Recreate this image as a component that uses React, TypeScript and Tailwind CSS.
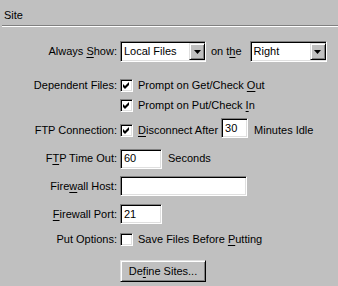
import React from "react";

const sunken =
  "border border-t-[#808080] border-l-[#808080] border-r-white border-b-white shadow-[inset_1px_1px_0_#000,inset_-1px_-1px_0_#dfdfdf] bg-white";
const raised =
  "border border-t-[#dfdfdf] border-l-[#dfdfdf] border-r-black border-b-black shadow-[inset_1px_1px_0_#fff,inset_-1px_-1px_0_#808080] bg-[#c0c0c0]";

function U({ children }: { children: React.ReactNode }) {
  return <span className="underline underline-offset-[2px] decoration-1">{children}</span>;
}

function Check({ checked, className = "" }: { checked: boolean; className?: string }) {
  return (
    <div className={`w-[13px] h-[13px] shrink-0 flex items-center justify-center ${sunken} ${className}`}>
      {checked && (
        <svg width="9" height="9" viewBox="0 0 9 9" className="block">
          <path d="M1 3 L3 5 L7 1 L7 4 L3 8 L1 6 Z" fill="#000" />
        </svg>
      )}
    </div>
  );
}

function Select({ value, width }: { value: string; width: number }) {
  return (
    <div
      className={`h-[21px] flex items-center justify-between pl-[3px] pr-[0px] ${sunken}`}
      style={{ width }}
    >
      <span>{value}</span>
      <div className={`w-[16px] h-[17px] flex items-center justify-center ${raised}`}>
        <svg width="7" height="4" viewBox="0 0 7 4" className="block">
          <path d="M0 0 H7 L3.5 4 Z" fill="#000" />
        </svg>
      </div>
    </div>
  );
}

function Input({ value, width }: { value?: string; width: number }) {
  return (
    <div className={`h-[20px] flex items-center pl-[3px] ${sunken}`} style={{ width }}>
      {value}
    </div>
  );
}

function Row({
  label,
  children,
  className = "",
  labelClass = "",
}: {
  label?: React.ReactNode;
  children: React.ReactNode;
  className?: string;
  labelClass?: string;
}) {
  return (
    <div className={`flex items-center ${className}`}>
      <div className={`w-[117px] text-right shrink-0 ${labelClass}`}>{label}</div>
      <div className="ml-[3px] flex items-center">{children}</div>
    </div>
  );
}

export default function App() {
  return (
    <div
      className="w-[338px] h-[286px] bg-[#c0c0c0] text-black text-[11px] leading-[13px] overflow-hidden"
      style={{ fontFamily: '"Liberation Sans", Arial, sans-serif' }}
    >
      <div className="h-[25px] pl-[4px] pt-[9px]">Site</div>
      <div className="ml-[2px] h-[1px] bg-[#808080]" />
      <div className="ml-[2px] h-[1px] bg-white" />

      <Row className="mt-[14px] h-[21px]" label={<>Always <U>S</U>how:</>}>
        <Select value="Local Files" width={86} />
        <span className="ml-[5px] mr-[8px]">
          on t<U>h</U>e
        </span>
        <Select value="Right" width={77} />
      </Row>

      <Row className="mt-[17px] h-[13px]" label="Dependent Files:">
        <Check checked />
        <span className="ml-[5px]">
          Prompt on Get/Check <U>O</U>ut
        </span>
      </Row>

      <Row className="mt-[7px] h-[13px]">
        <Check checked />
        <span className="ml-[5px]">
          Prompt on Put/Check <U>I</U>n
        </span>
      </Row>

      <Row className="mt-[6px] h-[20px]" labelClass="mt-[4px]" label="FTP Connection:">
        <Check checked className="mt-[4px]" />
        <span className="ml-[5px] mr-[3px] mt-[4px]">
          <U>D</U>isconnect After
        </span>
        <Input value="30" width={27} />
        <span className="ml-[6px] mt-[4px]">Minutes Idle</span>
      </Row>

      <Row className="mt-[10px] h-[21px]" label={<>F<U>T</U>P Time Out:</>}>
        <Input value="60" width={42} />
        <span className="ml-[6px]">Seconds</span>
      </Row>

      <Row className="mt-[7px] h-[20px]" label={<>Fire<U>w</U>all Host:</>}>
        <Input width={127} />
      </Row>

      <Row className="mt-[8px] h-[20px]" label={<><U>F</U>irewall Port:</>}>
        <Input value="21" width={42} />
      </Row>

      <Row className="mt-[9px] h-[13px]" label="Put Options:">
        <Check checked={false} />
        <span className="ml-[5px]">
          Save Files Before <U>P</U>utting
        </span>
      </Row>

      <Row className="mt-[14px] h-[22px]">
        <div className={`w-[86px] h-[22px] flex items-center justify-center ${raised}`}>
          De<U>f</U>ine Sites...
        </div>
      </Row>
    </div>
  );
}
